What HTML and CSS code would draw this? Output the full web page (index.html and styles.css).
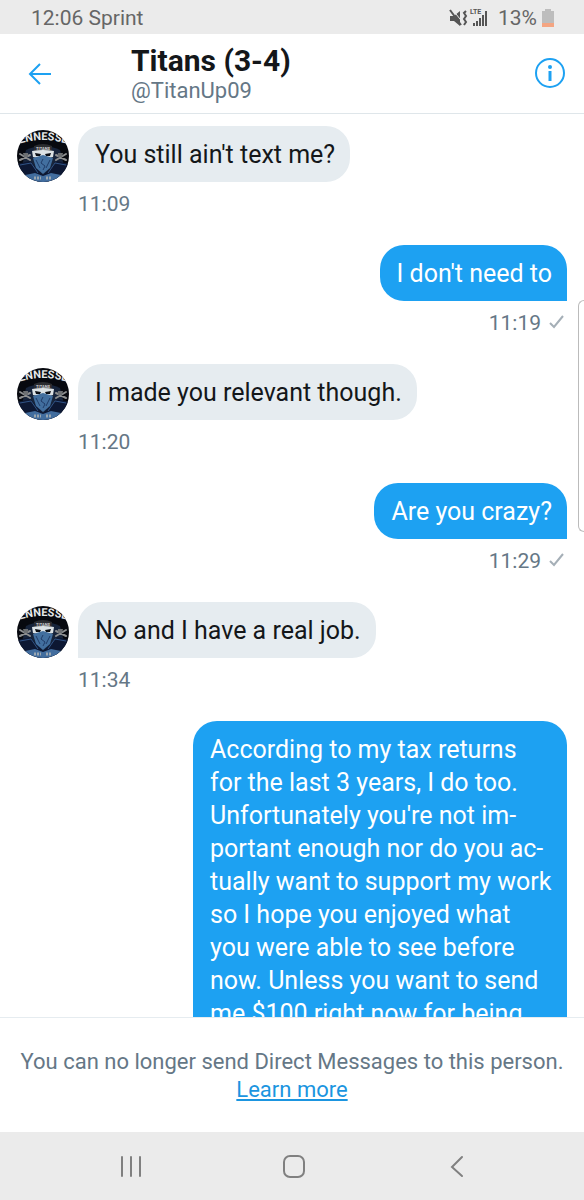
FILE: index.html
```html
<!DOCTYPE html>
<html lang="en">
<head>
    <meta charset="UTF-8">
    <meta name="viewport" content="width=device-width, initial-scale=1.0">
    <title>Titans (3-4)</title>
    <link rel="stylesheet" href="styles.css">
</head>
<body>
    <!-- shared avatar drawing -->
    <svg class="defs" width="0" height="0" aria-hidden="true">
        <defs>
            <clipPath id="round"><circle cx="26" cy="26" r="26"/></clipPath>
            <path id="arc" d="M-6 17 Q26 3 58 17"/>
            <symbol id="avatar" viewBox="0 0 52 52">
                <g clip-path="url(#round)">
                    <rect width="52" height="52" fill="#07090f"/>
                    <path d="M9 20 Q26 12 43 20 L47 36 L39 46 H13 L5 36Z" fill="#17243b"/>
                    <path d="M0 34 L13 31 L20 39 L26 45 L33 39 L40 31 L52 34 V52 H0Z" fill="#0d1833"/>
                    <path d="M3 35 L14 33 L21 43 M49 35 L38 33 L31 43" fill="none" stroke="#315486" stroke-width="1"/>
                    <path d="M8 45 L18 43 L26 46 L34 43 L44 45 V52 H8Z" fill="#426d9e"/>
                    <!-- bones -->
                    <path d="M3 24 L13 30 M3 30 L13 25 M49 24 L39 30 M49 30 L39 25" stroke="#8d8f90" stroke-width="2" stroke-linecap="round"/>
                    <path d="M6 23 h5 v4 h-4z M46 23 h-5 v4 h4z" fill="#6d7073"/>
                    <!-- cap, eyes and bandana -->
                    <path d="M17 16 Q26 12 35 16 L35 21 H17Z" fill="#2a2c30"/>
                    <path d="M15 21 Q26 19 37 21 L36 27 Q26 30 16 27Z" fill="#dce2e5"/>
                    <path d="M18 23 L24 24 L23 26 L19 26Z M34 23 L28 24 L29 26 L33 26Z" fill="#0b0e14"/>
                    <path d="M16 28 L26 25 L36 28 L33 38 L26 44 L19 38Z" fill="#426f9f"/>
                    <path d="M19 30 L23 38 M33 30 L29 38 M26 29 L24 33 L28 36 L26 40" fill="none" stroke="#203c68" stroke-width="1"/>
                    <text x="26" y="20" class="avatar-small">TITANS</text>
                    <text class="avatar-text"><textPath href="#arc" startOffset="50%">TENNESSEE</textPath></text>
                    <path d="M17 48 h7 M29 48 h6" stroke="#99a6b0" stroke-width="3" stroke-dasharray="2 1"/>
                </g>
            </symbol>
        </defs>
    </svg>

    <div class="status-bar">
        <span>12:06 Sprint</span>
        <div class="status-icons">
            <svg width="40" height="20" viewBox="0 0 40 20" fill="#555" aria-hidden="true">
                <path d="M1 8h4l6-5v15l-6-5H1z"/>
                <path d="M3 1l12 15" stroke="#ebebeb" stroke-width="1"/>
                <path d="M1 2l11 15" stroke="#555" stroke-width="2"/>
                <path d="M17 3l-2 2 2 3-2 3 2 3-2 3" fill="none" stroke="#555" stroke-width="2"/>
                <text x="21" y="6" class="lte">LTE</text>
                <path d="M24 15h2v3h-2zM27 13h2v5h-2zM30 10h2v8h-2zM33 7h2v11h-2zM36 3h2v15h-2z"/>
            </svg>
            <span class="percent">13%</span>
            <svg width="12" height="18" viewBox="0 0 12 18" aria-hidden="true">
                <path d="M3 0h6v2h3v16H0V2h3z" fill="#bdbdbd"/>
                <path d="M0 14h12v4H0z" fill="#f4a582"/>
            </svg>
        </div>
    </div>

    <header class="header">
        <button class="icon-button" aria-label="Back">
            <svg width="24" height="24" viewBox="0 0 24 24" fill="none" stroke="#1da1f2" stroke-width="2">
                <path d="M23 12H2M12 2L2 12l10 10"/>
            </svg>
        </button>
        <div class="user">
            <h1>Titans (3-4)</h1>
            <p>@TitanUp09</p>
        </div>
        <button class="icon-button" aria-label="Conversation info">
            <svg width="32" height="32" viewBox="0 0 32 32" fill="none" stroke="#1da1f2">
                <circle cx="16" cy="15" r="14" stroke-width="2"/>
                <path d="M16 13v10" stroke-width="3"/>
                <circle cx="16" cy="9" r="2" fill="#1da1f2" stroke="none"/>
            </svg>
        </button>
    </header>

    <main class="messages">
        <div class="message">
            <div class="row">
                <svg class="avatar" role="img" aria-label="Titans"><use href="#avatar"/></svg>
                <p class="bubble">You still ain't text me?</p>
            </div>
            <div class="time">11:09</div>
        </div>
        <div class="message sent">
            <p class="bubble">I don't need to</p>
            <div class="time">11:19
                <svg width="16" height="16" viewBox="0 0 16 16" fill="none" stroke="#a5afb7" stroke-width="2"><path d="M1 8l4 4L14 1"/></svg>
            </div>
        </div>
        <div class="message">
            <div class="row">
                <svg class="avatar" role="img" aria-label="Titans"><use href="#avatar"/></svg>
                <p class="bubble">I made you relevant though.</p>
            </div>
            <div class="time">11:20</div>
        </div>
        <div class="message sent">
            <p class="bubble">Are you crazy?</p>
            <div class="time">11:29
                <svg width="16" height="16" viewBox="0 0 16 16" fill="none" stroke="#a5afb7" stroke-width="2"><path d="M1 8l4 4L14 1"/></svg>
            </div>
        </div>
        <div class="message">
            <div class="row">
                <svg class="avatar" role="img" aria-label="Titans"><use href="#avatar"/></svg>
                <p class="bubble">No and I have a real job.</p>
            </div>
            <div class="time">11:34</div>
        </div>
        <div class="message sent">
            <p class="bubble">According to my tax returns for the last 3 years, I do too. Unfortunately you're not im&shy;portant enough nor do you ac&shy;tually want to support my work so I hope you enjoyed what you were able to see before now. Unless you want to send me $100 right now for being</p>
        </div>
    </main>

    <footer class="notice">
        <p>You can no longer send Direct Messages to this person.</p>
        <a href="#">Learn more</a>
    </footer>

    <nav class="nav-bar">
        <button aria-label="Recent apps">
            <svg width="24" height="24" viewBox="0 0 24 24" stroke="#808080" stroke-width="2" stroke-linecap="round"><path d="M3 3v19M12 3v19M21 3v19"/></svg>
        </button>
        <button aria-label="Home">
            <svg width="24" height="24" viewBox="0 0 24 24" fill="none" stroke="#808080" stroke-width="2"><rect x="2" y="2" width="20" height="21" rx="6"/></svg>
        </button>
        <button aria-label="Back">
            <svg width="24" height="24" viewBox="0 0 24 24" fill="none" stroke="#808080" stroke-width="2" stroke-linecap="round"><path d="M17 3L7 13l10 9"/></svg>
        </button>
    </nav>

    <div class="edge-handle"></div>
</body>
</html>
```
FILE: styles.css
```css
* {
    box-sizing: border-box;
}
body {
    display: flex;
    flex-direction: column;
    height: 100vh;
    margin: 0;
    font-family: Roboto, sans-serif;
    background-color: #fff;
    color: #14171a;
    overflow: hidden;
}
h1, p {
    margin: 0;
}
svg {
    display: block;
    flex: none;
}
button {
    display: flex;
    align-items: center;
    justify-content: center;
    padding: 0;
    border: none;
    background: none;
    cursor: pointer;
}
.defs {
    position: absolute;
}

/* status bar */
.status-bar {
    display: flex;
    align-items: center;
    justify-content: space-between;
    flex: none;
    height: 34px;
    padding: 2px 30px 0 31px;
    background-color: #ebebeb;
    color: #666;
    font-size: 21px;
}
.status-icons {
    display: flex;
    align-items: center;
}
.percent {
    margin: 0 5px 0 9px;
}
.lte {
    font-size: 7px;
    font-weight: bold;
}

/* header */
.header {
    display: flex;
    align-items: center;
    flex: none;
    height: 80px;
    padding: 0 16px 0 22px;
    border-bottom: 1px solid #dfe6ea;
}
.icon-button {
    width: 36px;
    height: 36px;
}
.user {
    flex: 1;
    margin-left: 73px;
}
.user h1 {
    font-size: 30px;
    line-height: 34px;
}
.user p {
    color: #657786;
    font-size: 22px;
    line-height: 26px;
}

/* conversation */
.messages {
    display: flex;
    flex: 1;
    flex-direction: column;
    gap: 27px;
    min-height: 0;
    padding: 12px 17px 0;
    overflow: hidden;
}
.message {
    display: flex;
    flex: none;
    flex-direction: column;
    align-items: flex-start;
}
.row {
    display: flex;
    align-items: flex-end;
    gap: 9px;
}
.avatar {
    width: 52px;
    height: 52px;
}
.avatar-text {
    fill: #e6e9eb;
    font-size: 11px;
    font-weight: bold;
    text-anchor: middle;
}
.avatar-small {
    fill: #d5dadd;
    font-size: 4px;
    font-weight: bold;
    text-anchor: middle;
}
.bubble {
    padding: 12px 15px 11px 17px;
    border-radius: 24px 24px 24px 0;
    background-color: #e6ecf0;
    font-size: 25px;
    line-height: 33px;
    hyphens: manual;
}
.time {
    display: flex;
    align-items: center;
    gap: 8px;
    margin: 8px 0 0 61px;
    color: #657786;
    font-size: 21px;
    line-height: 28px;
}
.sent {
    align-items: flex-end;
}
.sent .bubble {
    max-width: 68%;
    border-radius: 24px 24px 0 24px;
    background-color: #1da1f2;
    color: #fff;
}
.sent .time {
    margin-right: 2px;
}

/* notice */
.notice {
    flex: none;
    padding: 30px 8px 28px;
    border-top: 1px solid #e6ecf0;
    color: #657786;
    font-size: 22px;
    line-height: 28px;
    text-align: center;
}
.notice a {
    color: #1b95e0;
}

/* system navigation */
.nav-bar {
    display: flex;
    align-items: center;
    justify-content: space-around;
    flex: none;
    height: 68px;
    padding: 0 46px 0 50px;
    background-color: #ebebeb;
}
.nav-bar button {
    width: 48px;
    height: 48px;
}

.edge-handle {
    position: absolute;
    top: 300px;
    right: 0;
    width: 6px;
    height: 232px;
    border: 1px solid #bbb;
    border-right: none;
    border-radius: 6px 0 0 6px;
    background-color: #fff;
}
```
